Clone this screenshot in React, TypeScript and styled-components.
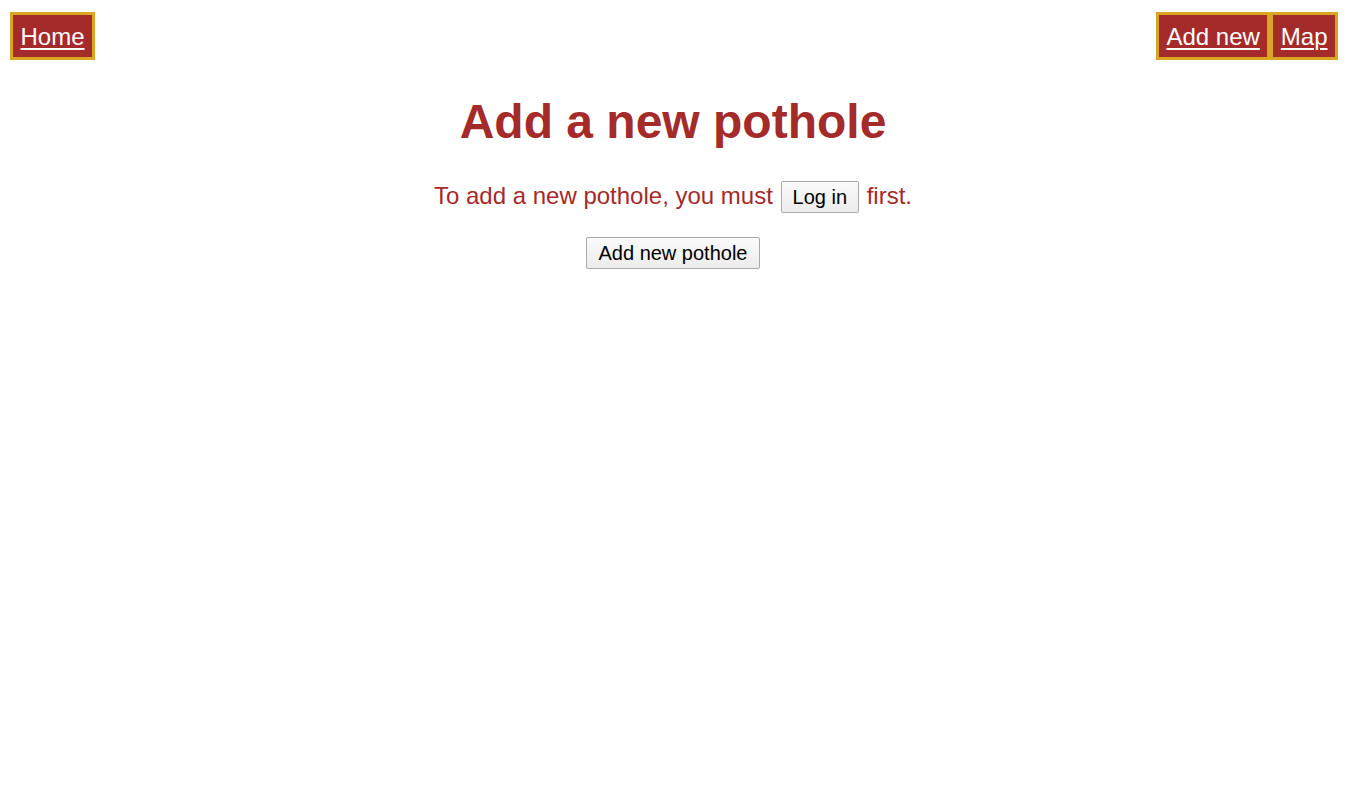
import React from "react";
import styled, { createGlobalStyle } from "styled-components";

const GlobalStyle = createGlobalStyle`
  body {
    margin: 8px;
    background: #ffffff;
    font-family: "Liberation Sans", Arial, sans-serif;
  }
`;

const NavBar = styled.nav`
  display: flex;
  justify-content: space-between;
  align-items: flex-start;
  margin-top: 4px;
  padding-left: 2px;
`;

const NavGroup = styled.div`
  display: flex;
`;

const NavLink = styled.a`
  display: block;
  background-color: #a52a2a;
  border: 3px solid #daa520;
  color: #ffffff;
  font-size: 24px;
  line-height: 27.6px;
  padding: 8px 7.5px 6.4px;
  text-decoration: underline;
  text-decoration-thickness: 2px;
  text-underline-offset: 3px;
  cursor: pointer;
`;

const Main = styled.main`
  text-align: center;
  color: #a52a2a;
`;

const Title = styled.h1`
  font-size: 48px;
  font-weight: bold;
  line-height: normal;
  margin: 34px 0 32px;
`;

const Notice = styled.p`
  font-size: 24px;
  line-height: normal;
  margin: 0 0 24px;
`;

const Button = styled.button<{ $inline?: boolean }>`
  font-family: "Liberation Sans", Arial, sans-serif;
  font-size: 20px;
  line-height: 22px;
  color: #000000;
  padding: 4px 11px;
  border: 1px solid #a9a9a9;
  border-radius: 2px;
  background: linear-gradient(#fbfbfb, #ececec);
  cursor: pointer;
  margin: ${(props) => (props.$inline ? "0 1px" : "0")};
`;

export default function App() {
  return (
    <>
      <GlobalStyle />
      <NavBar>
        <NavGroup>
          <NavLink href="#">Home</NavLink>
        </NavGroup>
        <NavGroup>
          <NavLink href="#">Add new</NavLink>
          <NavLink href="#">Map</NavLink>
        </NavGroup>
      </NavBar>
      <Main>
        <Title>Add a new pothole</Title>
        <Notice>
          To add a new pothole, you must <Button $inline>Log in</Button> first.
        </Notice>
        <div>
          <Button>Add new pothole</Button>
        </div>
      </Main>
    </>
  );
}
